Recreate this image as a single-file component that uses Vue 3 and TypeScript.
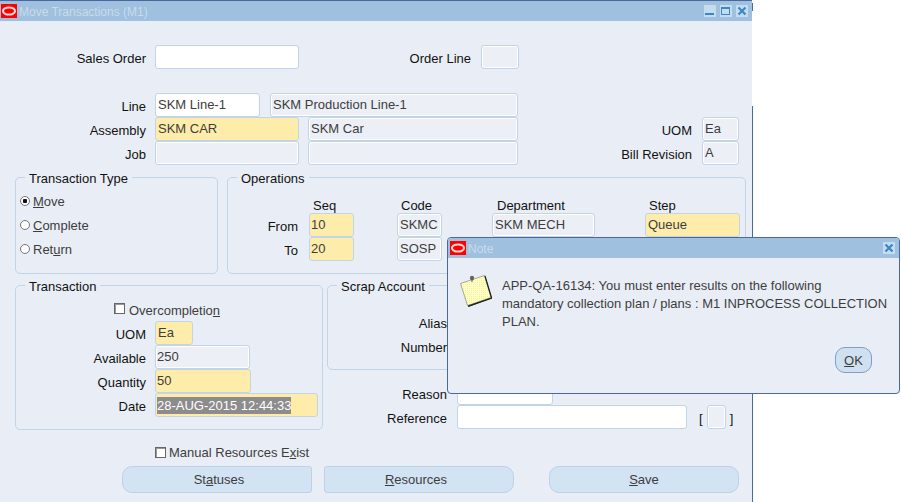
<script setup lang="ts">
const ops = [
  { label: 'From', seq: '10', code: 'SKMC', dept: 'SKM MECH', step: 'Queue' },
  { label: 'To', seq: '20', code: 'SOSP', dept: 'SKM SOSP', step: 'Queue' },
]
</script>

<template>
  <div class="screen">
    <div class="window">
      <div class="titlebar">
        <svg class="logo" viewBox="0 0 16 14"><rect width="16" height="14" fill="#ff0000" /><ellipse cx="8" cy="7" rx="6" ry="3.6" fill="none" stroke="#ffd9d9" stroke-width="2" /></svg>
        <span class="title-text">Move Transactions (M1)</span>
        <div class="controls">
          <span class="ctl"><svg viewBox="0 0 12 12"><rect x="1" y="8" width="9" height="2" fill="#3b86c8" /></svg></span>
          <span class="ctl"><svg viewBox="0 0 12 12"><rect x="1.5" y="2.5" width="8" height="7" fill="none" stroke="#3b86c8" stroke-width="1" /><rect x="1" y="2" width="9" height="2" fill="#3b86c8" /></svg></span>
          <span class="ctl"><svg viewBox="0 0 12 12"><path d="M2.5 2.5l7 7M9.5 2.5l-7 7" stroke="#3b86c8" stroke-width="2.2" fill="none" /></svg></span>
        </div>
      </div>

      <div class="form">
        <div class="row">
          <span class="lbl w-lbl">Sales Order</span>
          <span class="f white w144 ml9"></span>
          <span class="lbl w172">Order Line</span>
          <span class="f ro w38 ml10"></span>
        </div>
        <div class="row mt24">
          <span class="lbl w-lbl">Line</span>
          <span class="f white w105 ml9">SKM Line-1</span>
          <span class="f ro w248 ml10">SKM Production Line-1</span>
        </div>
        <div class="row">
          <span class="lbl w-lbl">Assembly</span>
          <span class="f req w144 ml9">SKM CAR</span>
          <span class="f ro w210 ml9">SKM Car</span>
          <span class="lbl w174">UOM</span>
          <span class="f ro w37 ml10">Ea</span>
        </div>
        <div class="row">
          <span class="lbl w-lbl">Job</span>
          <span class="f ro w144 ml9"></span>
          <span class="f ro w210 ml9"></span>
          <span class="lbl w174">Bill Revision</span>
          <span class="f ro w37 ml10">A</span>
        </div>

        <div class="groups-mid">
          <section class="group type-group">
            <div class="group-title">Transaction Type</div>
            <div class="radios">
              <div class="radio-row"><span class="radio on"></span><span><u>M</u>ove</span></div>
              <div class="radio-row"><span class="radio"></span><span><u>C</u>omplete</span></div>
              <div class="radio-row"><span class="radio"></span><span>Ret<u>u</u>rn</span></div>
            </div>
          </section>
          <section class="group ops-group">
            <div class="group-title">Operations</div>
            <div class="op-head">
              <span class="h-seq">Seq</span>
              <span class="h-code">Code</span>
              <span class="h-dept">Department</span>
              <span class="h-step">Step</span>
            </div>
            <div v-for="o in ops" :key="o.label" class="row">
              <span class="lbl w70">{{ o.label }}</span>
              <span class="f req tight w45 ml11">{{ o.seq }}</span>
              <span class="f ro w45 ml43">{{ o.code }}</span>
              <span class="f ro w103 ml50">{{ o.dept }}</span>
              <span class="f req w95 ml50">{{ o.step }}</span>
            </div>
          </section>
        </div>

        <div class="groups-low">
          <section class="group tx-group">
            <div class="group-title">Transaction</div>
            <div class="check-row over"><span class="check"></span><span class="over-text">Overcompletio<u>n</u></span></div>
            <div class="row">
              <span class="lbl w130">UOM</span>
              <span class="f req w38 ml9">Ea</span>
            </div>
            <div class="row">
              <span class="lbl w130">Available</span>
              <span class="f ro tight w95 ml9">250</span>
            </div>
            <div class="row">
              <span class="lbl w130">Quantity</span>
              <span class="f req tight w96 ml9">50</span>
            </div>
            <div class="row">
              <span class="lbl w130">Date</span>
              <span class="f req tight w163 ml9"><span class="sel">28-AUG-2015 12:44:33</span></span>
            </div>
          </section>

          <div class="low-right">
            <section class="group scrap-group">
              <div class="group-title">Scrap Account</div>
              <div class="row scrap-first">
                <span class="lbl w119">Alias</span>
                <span class="f white w200 ml10"></span>
              </div>
              <div class="row">
                <span class="lbl w119">Number</span>
                <span class="f white w200 ml10"></span>
              </div>
            </section>
            <div class="row reason">
              <span class="lbl w120">Reason</span>
              <span class="f white w96 ml10"></span>
            </div>
            <div class="row">
              <span class="lbl w120">Reference</span>
              <span class="f white w230 ml10"></span>
              <span class="bracket first">[</span>
              <span class="f ro w19 ml4"></span>
              <span class="bracket">]</span>
            </div>
          </div>
        </div>

        <div class="check-row manual"><span class="check"></span><span class="manual-text">Manual Resources E<u>x</u>ist</span></div>

        <div class="buttons">
          <button class="btn left">St<u>a</u>tuses</button>
          <button class="btn right ml12"><u>R</u>esources</button>
          <button class="btn both ml35"><u>S</u>ave</button>
        </div>
      </div>
    </div>

    <div class="edge">
      <span class="edge-top"></span>
      <span class="edge-main"></span>
    </div>

    <div class="dialog">
      <div class="dlg-title">
        <svg class="logo" viewBox="0 0 16 14"><rect width="16" height="14" fill="#ff0000" /><ellipse cx="8" cy="7" rx="6" ry="3.6" fill="none" stroke="#ffd9d9" stroke-width="2" /></svg>
        <span class="title-text">Note</span>
        <span class="ctl dlg-close"><svg viewBox="0 0 12 12"><path d="M2.5 2.5l7 7M9.5 2.5l-7 7" stroke="#3b86c8" stroke-width="2.2" fill="none" /></svg></span>
      </div>
      <div class="dlg-body">
        <svg class="note-icon" viewBox="0 0 34 34">
          <defs>
            <pattern id="dots" width="2" height="2" patternUnits="userSpaceOnUse">
              <rect width="2" height="2" fill="#ffffc8" />
              <rect width="1" height="1" fill="#f6f290" />
            </pattern>
          </defs>
          <path d="M2 10L26 2L33 24.5L9.5 33Z" fill="#333" />
          <path d="M1.5 9.5L25.5 1.5L32 23.5L8.5 31.5Z" fill="url(#dots)" stroke="#8a8a7a" stroke-width="0.7" />
          <path d="M9 32.2L32.8 24M32.6 24L26 2" stroke="#222" stroke-width="1.2" fill="none" />
          <circle cx="13" cy="4" r="2.2" fill="#666" />
          <path d="M13 4v4" stroke="#555" stroke-width="1" />
        </svg>
        <p class="dlg-text">APP-QA-16134: You must enter results on the following<br />mandatory collection plan / plans : M1 INPROCESS COLLECTION<br />PLAN.</p>
      </div>
      <div class="dlg-actions"><button class="ok-btn"><u>O</u>K</button></div>
    </div>
  </div>
</template>

<style>
html, body { margin: 0; background: #fff; }
</style>

<style scoped>
.screen {
  position: relative;
  display: flex;
  width: 901px;
  height: 502px;
  overflow: hidden;
  background: #fff;
  font-family: "Liberation Sans", Arial, sans-serif;
  font-size: 13px;
  color: #111;
}
.window {
  width: 752px;
  height: 502px;
  box-sizing: border-box;
  border-top: 1px solid #4a6899;
  background: #e9eef6;
}
.titlebar {
  display: flex;
  align-items: center;
  height: 20px;
  padding-left: 1px;
  background: #9fc0de;
}
.logo { width: 16px; height: 14px; flex: none; }
.title-text { margin-left: 2px; padding-top: 1px; color: #c8dbec; font-size: 12px; }
.controls { display: flex; gap: 4px; margin-left: auto; margin-right: 4px; }
.ctl { display: block; width: 12px; height: 12px; background: #c5dcef; }
.ctl svg { display: block; width: 12px; height: 12px; }

.form { padding: 24px 0 0 15px; }
.row { display: flex; height: 24px; }
.mt24 { margin-top: 24px; }
.lbl {
  flex: none;
  box-sizing: border-box;
  padding-top: 6px;
  line-height: 16px;
  text-align: right;
  white-space: nowrap;
  color: #111;
}
.f {
  flex: none;
  box-sizing: border-box;
  height: 24px;
  padding: 3px 0 0 2px;
  line-height: 16px;
  border: 1px solid #c2d4e8;
  border-radius: 3px;
  color: #3d3d3d;
  white-space: nowrap;
  overflow: hidden;
}
.white { background: #fff; }
.ro { background: #eceff5; box-shadow: inset 0 0 0 1px #fff; }
.req { background: #feedaa; }
.tight { padding-left: 1px; }
.sel { display: inline-block; background: #8c8c8c; color: #fff; line-height: 17px; }

.w-lbl { width: 131px; }
.w70 { width: 70px; }
.w119 { width: 119px; }
.w120 { width: 120px; }
.w130 { width: 130px; }
.w172 { width: 172px; }
.w174 { width: 174px; }
.w19 { width: 19px; }
.w37 { width: 37px; }
.w38 { width: 38px; }
.w45 { width: 45px; }
.w95 { width: 95px; }
.w96 { width: 96px; }
.w103 { width: 103px; }
.w105 { width: 105px; }
.w144 { width: 144px; }
.w163 { width: 163px; }
.w200 { width: 200px; }
.w210 { width: 210px; }
.w230 { width: 230px; }
.w248 { width: 248px; }
.ml4 { margin-left: 4px; }
.ml9 { margin-left: 9px; }
.ml10 { margin-left: 10px; }
.ml11 { margin-left: 11px; }
.ml12 { margin-left: 12px; }
.ml35 { margin-left: 35px; }
.ml43 { margin-left: 43px; }
.ml50 { margin-left: 50px; }

.group {
  box-sizing: border-box;
  flex: none;
  border: 1px solid #c2d4e8;
  border-radius: 5px;
}
.group-title {
  width: fit-content;
  margin: -7px 0 0 9px;
  padding: 0 4px;
  height: 16px;
  line-height: 16px;
  background: #e9eef6;
  color: #111;
}
.groups-mid { display: flex; gap: 9px; margin-top: 12px; }
.type-group { width: 203px; height: 97px; }
.ops-group { width: 519px; height: 97px; }
.radios { margin-top: 2px; }
.radio-row { display: flex; align-items: center; height: 24px; padding-left: 4px; color: #3d3d3d; }
.radio {
  box-sizing: border-box;
  width: 10px;
  height: 10px;
  margin-right: 3px;
  border: 1px solid #777;
  border-radius: 50%;
  background: #fff;
}
.on { background: radial-gradient(circle, #111 0 2px, #fff 2.5px); }

.op-head { display: flex; height: 15px; margin-top: 11px; line-height: 15px; }
.h-seq { margin-left: 85px; width: 88px; }
.h-code { width: 96px; }
.h-dept { width: 152px; }

.groups-low { display: flex; gap: 4px; margin-top: 11px; align-items: flex-start; }
.tx-group { width: 308px; height: 145px; }
.low-right { flex: none; width: 419px; }
.scrap-group { width: 419px; height: 85px; }
.scrap-first { margin-top: 15px; }
.reason { margin-top: 11px; }
.bracket { flex: none; margin-left: 4px; padding-top: 6px; line-height: 16px; color: #111; }
.bracket.first { margin-left: 12px; }

.check-row { display: flex; color: #3d3d3d; }
.over { align-items: center; height: 26px; padding-left: 98px; }
.over-text { margin-left: 1px; padding-top: 4px; }
.manual { align-items: flex-start; height: 19px; margin-top: 17px; margin-left: 140px; }
.manual-text { line-height: 12px; }
.check {
  box-sizing: border-box;
  width: 11px;
  height: 11px;
  margin-right: 3px;
  border: 1px solid #666;
  background: #fff;
  box-shadow: inset 1px 1px 0 #999;
}

.buttons { display: flex; margin-left: 107px; }
.btn {
  box-sizing: border-box;
  width: 190px;
  height: 27px;
  border: 1px solid #bdd1e7;
  background: #d2e3f4;
  color: #3d3d3d;
  font: inherit;
}
.left { padding: 0 0 1px 4px; border-radius: 10px 3px 3px 10px; }
.right { padding: 0 6px 1px 0; border-radius: 3px 10px 10px 3px; }
.both { padding: 0 0 1px; border-radius: 10px; }

.edge { display: flex; flex-direction: column; flex: none; width: 1px; height: 502px; }
.edge-top { height: 8px; margin-top: 3px; background: #4a6899; }
.edge-main { height: 396px; margin-top: 95px; background: #4a6899; }

.dialog {
  position: absolute;
  left: 447px;
  top: 237px;
  box-sizing: border-box;
  width: 453px;
  height: 157px;
  border: 1px solid #4a6899;
  border-radius: 4px;
  background: #e9eef6;
  overflow: hidden;
}
.dlg-title {
  display: flex;
  align-items: center;
  height: 20px;
  padding-left: 2px;
  background: #9fc0de;
}
.dlg-close { margin-left: auto; margin-right: 4px; }
.dlg-body { display: flex; height: 82px; padding-top: 18px; }
.note-icon { flex: none; width: 34px; height: 34px; margin: -2px 0 0 11px; }
.dlg-text {
  margin: 1px 0 0 9px;
  width: 392px;
  line-height: 18px;
  color: #3d3d3d;
  white-space: nowrap;
}
.dlg-actions { display: flex; justify-content: flex-end; padding-right: 27px; }
.ok-btn {
  box-sizing: border-box;
  width: 37px;
  height: 26px;
  margin-top: -11px;
  padding: 0;
  border: 1px solid #7f9ec2;
  border-radius: 10px;
  background: #cfe0f1;
  color: #3d3d3d;
  font: inherit;
}
</style>
